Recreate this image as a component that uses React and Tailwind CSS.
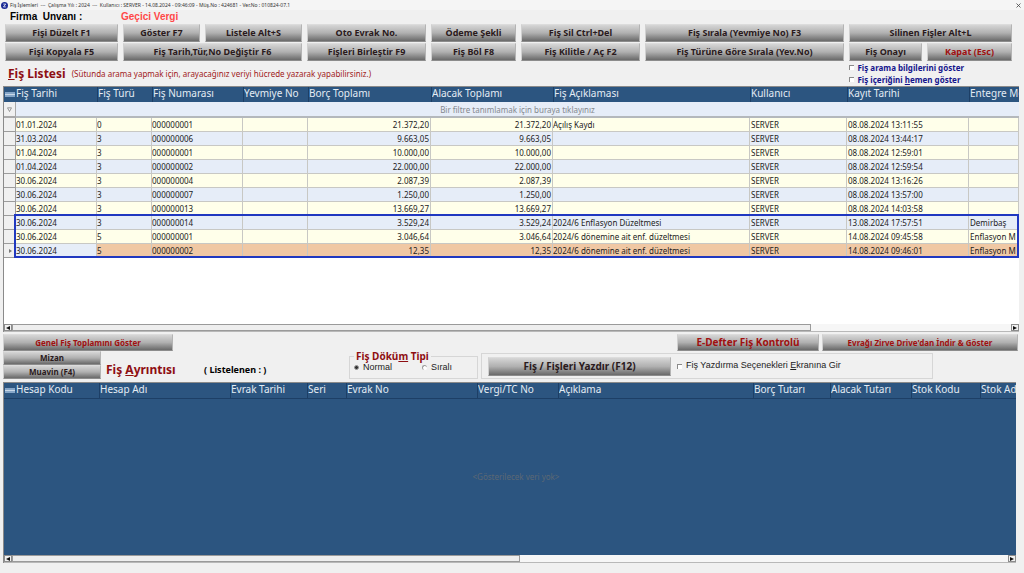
import clsx from "clsx";

const UI = "font-['Noto_Sans','Open_Sans',sans-serif]";
const ARIAL = "font-['Liberation_Sans',Arial,sans-serif]";

const VOUCHERS = [
  ["01.01.2024", "0", "000000001", "", "21.372,20", "21.372,20", "Açılış Kaydı", "SERVER", "08.08.2024 13:11:55", ""],
  ["31.03.2024", "3", "000000006", "", "9.663,05", "9.663,05", "", "SERVER", "08.08.2024 13:44:17", ""],
  ["01.04.2024", "3", "000000001", "", "10.000,00", "10.000,00", "", "SERVER", "08.08.2024 12:59:01", ""],
  ["01.04.2024", "3", "000000002", "", "22.000,00", "22.000,00", "", "SERVER", "08.08.2024 12:59:54", ""],
  ["30.06.2024", "3", "000000004", "", "2.087,39", "2.087,39", "", "SERVER", "08.08.2024 13:16:26", ""],
  ["30.06.2024", "3", "000000007", "", "1.250,00", "1.250,00", "", "SERVER", "08.08.2024 13:57:00", ""],
  ["30.06.2024", "3", "000000013", "", "13.669,27", "13.669,27", "", "SERVER", "08.08.2024 14:03:58", ""],
  ["30.06.2024", "3", "000000014", "", "3.529,24", "3.529,24", "2024/6 Enflasyon Düzeltmesi", "SERVER", "13.08.2024 17:57:51", "Demirbaş"],
  ["30.06.2024", "5", "000000001", "", "3.046,64", "3.046,64", "2024/6 dönemine ait enf. düzeltmesi", "SERVER", "14.08.2024 09:45:58", "Enflasyon M"],
  ["30.06.2024", "5", "000000002", "", "12,35", "12,35", "2024/6 dönemine ait enf. düzeltmesi", "SERVER", "14.08.2024 09:46:01", "Enflasyon M"],
];

const VOUCHER_COLUMNS = [
  { title: "Fiş Tarihi", width: "w-[81px]" },
  { title: "Fiş Türü", width: "w-[55px]" },
  { title: "Fiş Numarası", width: "w-[91px]" },
  { title: "Yevmiye No", width: "w-[65px]" },
  { title: "Borç Toplamı", width: "w-[123px]" },
  { title: "Alacak Toplamı", width: "w-[122px]" },
  { title: "Fiş Açıklaması", width: "" },
  { title: "Kullanıcı", width: "w-[97px]" },
  { title: "Kayıt Tarihi", width: "w-[122px]" },
  { title: "Entegre Mo", width: "w-[50px]" },
];

const DETAIL_COLUMNS = [
  { title: "Hesap Kodu", width: "w-[83px]" },
  { title: "Hesap Adı", width: "w-[131px]" },
  { title: "Evrak Tarihi", width: "w-[77px]" },
  { title: "Seri", width: "w-[39px]" },
  { title: "Evrak No", width: "w-[131px]" },
  { title: "Vergi/TC No", width: "w-[81px]" },
  { title: "Açıklama", width: "" },
  { title: "Borç Tutarı", width: "w-[77px]" },
  { title: "Alacak Tutarı", width: "w-[81px]" },
  { title: "Stok Kodu", width: "w-[69px]" },
  { title: "Stok Ad", width: "w-[36px]" },
];

function MetalButton({ children, className }) {
  return (
    <button
      type="button"
      className={clsx(
        "flex items-center justify-center overflow-hidden whitespace-nowrap border border-t-[#dcdcdc] border-r-[#b4b4b4] border-b-[#8c8c8c] border-l-[#d0d0d0] bg-linear-to-b from-[#d6d6d6] via-[#b0b0b0] to-[#6a6a6a] font-bold",
        className
      )}
    >
      {children}
    </button>
  );
}

function CheckBox({ id, children, className }) {
  return (
    <label htmlFor={id} className={clsx("flex items-center whitespace-nowrap", className)}>
      <input
        id={id}
        type="checkbox"
        className="size-[5px] shrink-0 appearance-none border-t border-l border-[#8a8a8a] bg-white checked:bg-gray-700"
      />
      <span>{children}</span>
    </label>
  );
}

function Radio({ id, children, defaultChecked }) {
  return (
    <label htmlFor={id} className="flex items-center gap-1 whitespace-nowrap">
      <input
        id={id}
        type="radio"
        name="dokum"
        defaultChecked={defaultChecked}
        className="size-[5px] shrink-0 appearance-none rounded-full border-t border-l border-[#9a9a9a] bg-white checked:border checked:bg-[#333]"
      />
      {children}
    </label>
  );
}

function HeaderRow({ columns }) {
  return (
    <tr className="h-[15px] bg-[#2c5580] text-[10px] leading-[13px] text-[#e4ecf4]">
      <th className="w-3 p-0">
        <svg viewBox="0 0 10 5" className="mx-auto block h-[5px] w-[10px]">
          <rect width="10" height="5" fill="#86a6c8" />
          <path d="M0 2.5H10" stroke="#c9d8e8" />
        </svg>
      </th>
      {columns.map((column, i) => (
        <th
          key={column.title}
          className={clsx(
            "overflow-hidden p-0 text-left align-top font-normal whitespace-nowrap",
            i > 0 && "border-l border-[#1d3f66]",
            column.width
          )}
        >
          {column.title}
        </th>
      ))}
    </tr>
  );
}

function ScrollBar({ thumb }) {
  return (
    <div className="flex h-2 shrink-0 border-b border-[#b8b8b8] bg-[#f6f6f6]">
      <button type="button" aria-label="Sola kaydır" className="flex w-2 items-center justify-center border border-[#8c8c8c] bg-[#f0f0f0]">
        <svg viewBox="0 0 4 4" className="size-1">
          <path d="M4 0V4L0 2Z" fill="#111" />
        </svg>
      </button>
      <div className="flex-1">
        <div className={clsx("h-full border border-[#9a9a9a] bg-[#eeeeee]", thumb)} />
      </div>
      <button type="button" aria-label="Sağa kaydır" className="flex w-2 items-center justify-center border border-[#8c8c8c] bg-[#f0f0f0]">
        <svg viewBox="0 0 4 4" className="size-1">
          <path d="M0 0V4L4 2Z" fill="#111" />
        </svg>
      </button>
    </div>
  );
}

function TitleBar() {
  return (
    <header className="flex h-[10px] items-center bg-[#f5f5f5] px-px text-[5px] leading-[10px] text-[#333]">
      <svg viewBox="0 0 8 8" className="mr-[2px] size-[7px]">
        <circle cx="4" cy="4" r="4" fill="#1c2c96" />
        <path d="M2.6 2.4H5.4L2.8 5.6H5.5" stroke="#fff" strokeWidth="0.9" fill="none" />
      </svg>
      <span className="flex-1 whitespace-pre">
        {"Fiş İşlemleri  ---  Çalışma Yılı : 2024  ---  Kullanıcı : SERVER - 14.08.2024 - 09:46:09 - Müş.No : 424681 - Ver.No : 010824-07.1"}
      </span>
      <button type="button" aria-label="Kapat" className="mr-[2px]">
        <svg viewBox="0 0 5 5" className="block size-[5px]">
          <path d="M0.5 0.5L4.5 4.5M4.5 0.5L0.5 4.5" stroke="#444" strokeWidth="0.8" />
        </svg>
      </button>
    </header>
  );
}

function Toolbar() {
  return (
    <div className="mr-3 ml-[5px] grid auto-rows-[18px] grid-cols-[113fr_77fr_97fr_119fr_85fr_119fr_199fr_73fr_85fr] gap-x-[5px] gap-y-px text-[9px] text-[#2a1a1c]">
      <MetalButton>Fişi Düzelt F1</MetalButton>
      <MetalButton>Göster F7</MetalButton>
      <MetalButton>Listele Alt+S</MetalButton>
      <MetalButton>Oto Evrak No.</MetalButton>
      <MetalButton>Ödeme Şekli</MetalButton>
      <MetalButton>Fiş Sil Ctrl+Del</MetalButton>
      <MetalButton>Fiş Sırala (Yevmiye No) F3</MetalButton>
      <MetalButton className="col-span-2">Silinen Fişler Alt+L</MetalButton>
      <MetalButton>Fişi Kopyala F5</MetalButton>
      <MetalButton className="col-span-2">Fiş Tarih,Tür,No Değiştir F6</MetalButton>
      <MetalButton>Fişleri Birleştir F9</MetalButton>
      <MetalButton>Fiş Böl F8</MetalButton>
      <MetalButton>Fiş Kilitle / Aç F2</MetalButton>
      <MetalButton>Fiş Türüne Göre Sırala (Yev.No)</MetalButton>
      <MetalButton>Fiş Onayı</MetalButton>
      <MetalButton className="text-[#a01010]">Kapat (Esc)</MetalButton>
    </div>
  );
}

function VoucherTable() {
  return (
    <section className="mr-[5px] ml-[3px] border-t border-l border-[#8a8a8a] bg-white">
      <div className="relative">
        <table className="w-full table-fixed border-separate border-spacing-0">
          <thead>
            <HeaderRow columns={VOUCHER_COLUMNS} />
          </thead>
          <tbody className="text-[8px] leading-[13px] text-[#1c1c1c]">
            <tr className="h-4">
              <td className="border-r border-b-2 border-[#a8a8a8] bg-[#f0f0f0] p-0">
                <svg viewBox="0 0 5 5" className="mx-auto block size-[5px]">
                  <path d="M0.5 0.8H4.5L2.5 4.5Z" stroke="#777" strokeWidth="0.7" fill="none" />
                </svg>
              </td>
              <td colSpan={10} className="border-b-2 border-[#b4b8bc] bg-[#e6edf8] p-0 text-center text-[#84888e]">
                Bir filtre tanımlamak için buraya tıklayınız
              </td>
            </tr>
            {VOUCHERS.map((row, r) => {
              const current = r === VOUCHERS.length - 1;
              return (
                <tr key={r} className="h-[14px]">
                  <td className="border-r border-b border-[#9c9c9c] bg-[#f0f0f0] p-0">
                    {current && (
                      <svg viewBox="0 0 4 4" className="mx-auto block size-1">
                        <path d="M1 0V4L4 2Z" fill="#777" />
                      </svg>
                    )}
                  </td>
                  {row.map((value, c) => (
                    <td
                      key={c}
                      className={clsx(
                        "overflow-hidden border-r border-b border-[#c8c8c4] p-0 whitespace-nowrap",
                        (c === 4 || c === 5) && "pr-px text-right",
                        c > 6 && "pl-px",
                        current && c > 0 && "bg-[#f0c8a4]",
                        current && c === 0 && "bg-[#e6edf8]",
                        !current && r % 2 === 0 && "bg-[#ffffea]",
                        !current && r % 2 === 1 && "bg-[#e6edf8]"
                      )}
                    >
                      {value}
                    </td>
                  ))}
                </tr>
              );
            })}
          </tbody>
        </table>
        {/* frame around the last three vouchers */}
        <div className="pointer-events-none absolute right-0 bottom-0 left-[10px] h-11 border-2 border-[#2038c0]" />
      </div>
      <div className="h-[66px]" />
      <ScrollBar thumb="w-[80%]" />
    </section>
  );
}

function DetailBar() {
  return (
    <div className="mr-[6px] ml-[3px] text-[#2a1a1c]">
      <div className="flex h-[17px] gap-[3px] text-[8px] text-[#a01010]">
        <MetalButton className="w-[170px]">Genel Fiş Toplamını Göster</MetalButton>
        <MetalButton className="ml-auto w-[142px] text-[10px]">E-Defter Fiş Kontrolü</MetalButton>
        <MetalButton className="w-[196px]">Evrağı Zirve Drive'dan İndir &amp; Göster</MetalButton>
      </div>
      <div className="flex h-[31px] items-start">
        <div className="flex w-[98px] flex-col text-[8px] leading-3">
          <MetalButton className="h-[14px]">Mizan</MetalButton>
          <MetalButton className="h-[14px]">Muavin (F4)</MetalButton>
        </div>
        <h2 className="ml-[5px] w-[98px] pt-[11px] text-[12px] leading-4 font-bold whitespace-nowrap text-[#8e0e12]">
          Fiş <u>A</u>yrıntısı
        </h2>
        <p className="w-[145px] pt-[11px] text-[9px] leading-4 font-bold whitespace-nowrap text-black">( Listelenen : )</p>
        <fieldset className="mr-[3px] h-[28px] w-[129px] border border-[#d6d6d6] px-1">
          <legend className="px-[2px] text-[10px] leading-[10px] font-bold text-[#8e0e12]">
            Fiş Dökü<u>m</u> Tipi
          </legend>
          <div className={clsx("flex gap-[30px] text-[9px] leading-3 text-[#222]", ARIAL)}>
            <Radio id="normal" defaultChecked>Normal</Radio>
            <Radio id="sirali">Sıralı</Radio>
          </div>
        </fieldset>
        <div className="mt-[2px] flex h-[26px] w-[452px] items-center border border-[#d6d6d6] px-[6px]">
          <MetalButton className="mr-[6px] h-[19px] w-[183px] text-[10px]">Fiş / Fişleri Yazdır (F12)</MetalButton>
          <CheckBox id="secenek" className={clsx("gap-1 text-[9px] text-[#222]", ARIAL)}>
            Fiş Yazdırma Seçenekleri <u>E</u>kranına Gir
          </CheckBox>
        </div>
      </div>
    </div>
  );
}

function DetailTable() {
  return (
    <section className="mr-2 mb-[10px] ml-[3px] flex flex-1 flex-col border-t border-l border-[#8a8a8a] bg-[#2c5580]">
      <table className="w-full table-fixed border-separate border-spacing-0 border-b border-[#1d3f66]">
        <thead>
          <HeaderRow columns={DETAIL_COLUMNS} />
        </thead>
      </table>
      <div className="flex flex-1 items-center justify-center pl-3 text-[8px] text-[#5c6874]">&lt;Gösterilecek veri yok&gt;</div>
      <ScrollBar thumb="w-[51%]" />
    </section>
  );
}

export default function App() {
  return (
    <main className={clsx("flex min-h-screen flex-col overflow-hidden bg-[#f0f0f0]", UI)}>
      <TitleBar />
      <div className={clsx("flex h-[14px] pl-[10px] text-[10px] leading-[14px] font-bold", ARIAL)}>
        <span className="w-[111px] whitespace-pre text-black">{"Firma  Unvanı :"}</span>
        <span className="text-[#ff4848]">Geçici Vergi</span>
      </div>
      <Toolbar />
      <div className="flex h-[25px] items-center pl-2">
        <h1 className="mr-[6px] text-[12px] font-bold text-[#8e0e12]">
          <u>F</u>iş Listesi
        </h1>
        <p className="text-[8px] text-[#a02020]">
          (Sütunda arama yapmak için, arayacağınız veriyi hücrede yazarak yapabilirsiniz.)
        </p>
        <div className="mr-[60px] ml-auto flex flex-col text-[8px] leading-3 font-bold text-[#14148c]">
          <CheckBox id="arama" className="gap-[3px]">Fiş arama bilgilerini göster</CheckBox>
          <CheckBox id="icerik" className="gap-[3px]">
            Fiş içeriğini <u>h</u>emen göster
          </CheckBox>
        </div>
      </div>
      <VoucherTable />
      <div className="h-[2px]" />
      <DetailBar />
      <DetailTable />
    </main>
  );
}
